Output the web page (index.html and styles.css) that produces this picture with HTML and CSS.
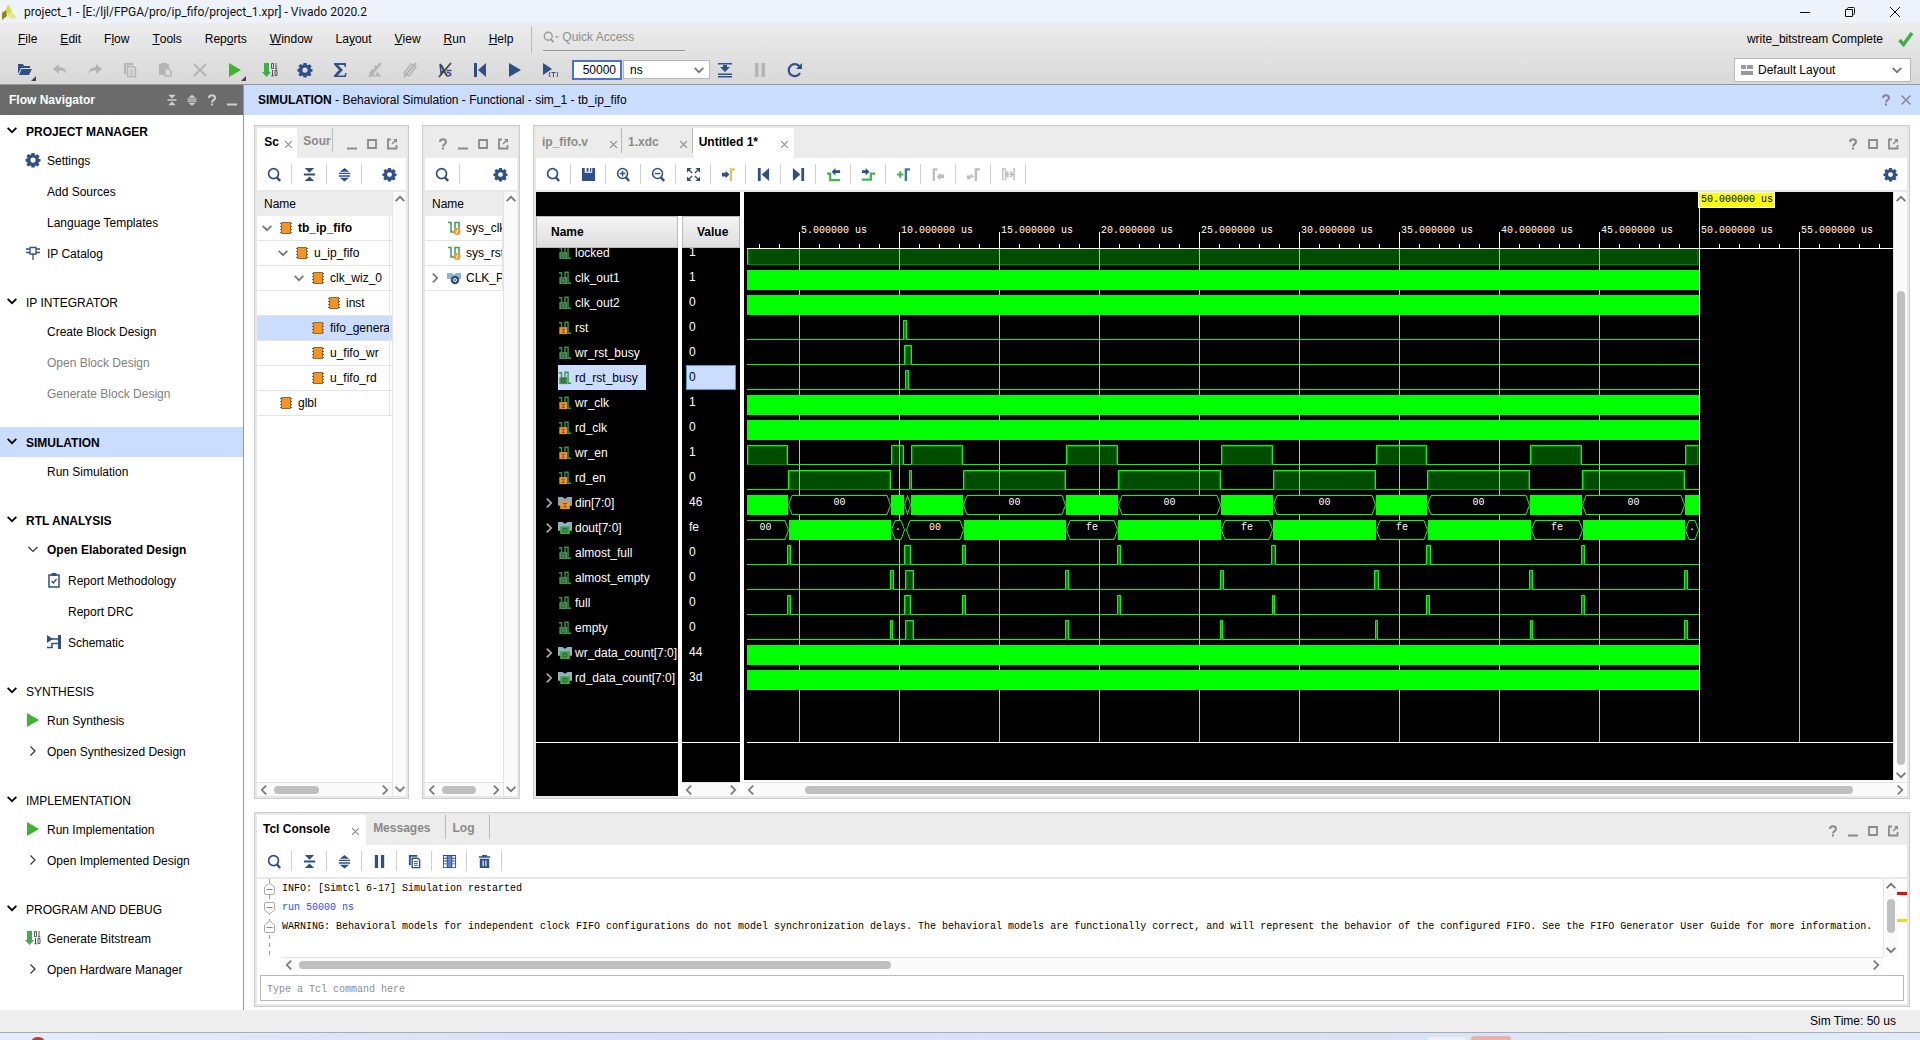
FILE: index.html
```html
<!DOCTYPE html>
<html lang="en">
<head>
<meta charset="utf-8">
<title>project_1 - [E:/ljl/FPGA/pro/ip_fifo/project_1.xpr] - Vivado 2020.2</title>
<link rel="stylesheet" href="styles.css">
</head>
<body>
<svg class="sprite" aria-hidden="true">
  <symbol id="logo" viewBox="0 0 16 16"><path d="M7 0l4 7-3 4-4-3z" fill="#d9d94a"/><path d="M1 9l4-3 1 6-5 4z" fill="#8a8a10"/><path d="M6 12l5-4 5 6-5 1z" fill="#e6e68c"/></symbol>
  <symbol id="folder" viewBox="0 0 16 16"><path d="M1 12V2h5l1 2h6v2H4z" fill="#2f4f87"/><path d="M4.500 7H15l-3 6H2z" fill="#2f4f87"/></symbol>
  <symbol id="undo" viewBox="0 0 16 16"><path d="M1 7l6-5v3c5 0 7 3 8 7-2-3-4-3.500-8-3.500V12z" fill="#b4b4b4"/></symbol>
  <symbol id="redo" viewBox="0 0 16 16"><path d="M15 7L9 2v3C4 5 2 8 1 12c2-3 4-3.500 8-3.500V12z" fill="#b4b4b4"/></symbol>
  <symbol id="copy" viewBox="0 0 16 16"><path d="M2 1h9v2H4v9H2z" fill="currentColor"/><path d="M5.500 4.500h6l2 2v8h-8z" fill="none" stroke="currentColor" stroke-width="1.500"/><path d="M7.500 8h4M7.500 10h4M7.500 12h4" stroke="currentColor"/></symbol>
  <symbol id="paste" viewBox="0 0 16 16"><path d="M2 2h10v4H8v7H2zM4 1h6v1H4z" fill="#b4b4b4"/><path d="M8 7h4l2 2v5H8z" fill="none" stroke="#b4b4b4" stroke-width="1.500"/></symbol>
  <symbol id="cross" viewBox="0 0 16 16"><path d="M2 2l12 12M14 2L2 14" stroke="currentColor" stroke-width="2"/></symbol>
  <symbol id="play" viewBox="0 0 16 16"><path d="M2 1l12 7-12 7z" fill="currentColor"/></symbol>
  <symbol id="bits" viewBox="0 0 16 16"><path d="M2 1h5v9h2l-4.500 5L0 10h2z" fill="#41ad49"/><path d="M9.500 1.500h2v5h-2zM14 1v6M12.800 6.800h2.500M10.500 8v6M9.300 13.800h2.500M13 8.500h2v5h-2z" fill="none" stroke="#555"/></symbol>
  <symbol id="gear" viewBox="0 0 16 16"><path fill="#2f4f87" fill-rule="evenodd" d="M6.500 1h3l.4 1.900 1 .4L12.600 2.200l2 2-1.100 1.700.4 1L15.500 7v2.500l-1.600.4-.5 1 1.100 1.600-2 2-1.600-1-1 .4L9.500 15.500h-3l-.4-1.700-1-.4-1.700 1.100-2-2 1.100-1.600-.4-1L.5 9.500V7l1.700-.4.4-1L1.500 4.100l2-2 1.600 1 1-.4zM8 5.500a2.600 2.600 0 100 5.200 2.600 2.600 0 000-5.200z"/></symbol>
  <symbol id="sigma" viewBox="0 0 16 16"><path d="M2 1h12v4h-1.200L12 3H6l5 5-5.500 5.500H12.500L13.300 11H14.500L14 15H2v-1.500L7 8 2 2.500z" fill="#2f4f87"/></symbol>
  <symbol id="brushx" viewBox="0 0 16 16"><path d="M2 12l3-5 3 1-1 5zM8 3l3 2-2 3-2-2zM10 9l3 4h-4zM2 13h12v1.500H2z" fill="#b4b4b4"/><path d="M2 15L14 1" stroke="#b4b4b4" stroke-width="2"/></symbol>
  <symbol id="eraserx" viewBox="0 0 16 16"><path d="M2 11l7-9 5 3-7 9zM6 10l5-6" fill="none" stroke="#b4b4b4" stroke-width="1.500"/><path d="M2 15L14 1" stroke="#b4b4b4" stroke-width="2"/></symbol>
  <symbol id="probex" viewBox="0 0 16 16"><path d="M3 2l1 9 3-3zM9.500 8.500h5M10 10.500c5 0 5 3.500 0 3.500" fill="none" stroke="#2f4f87" stroke-width="1.500"/><path d="M2 15L14 1M4 3l6 11" stroke="#444" stroke-width="1.800"/></symbol>
  <symbol id="first" viewBox="0 0 16 16"><path d="M2 1h3v14H2zM14 1v14L6 8z" fill="#2f4f87"/></symbol>
  <symbol id="last" viewBox="0 0 16 16"><path d="M11 1h3v14h-3zM2 1v14l8-7z" fill="#2f4f87"/></symbol>
  <symbol id="playt" viewBox="0 0 16 16"><path d="M1 1l9 6-9 6z" fill="#2f4f87"/><path d="M8 10q-1.500 2.500 0 5M15 10q1.500 2.500 0 5M9.500 10.500h4M11.500 10.500V15" fill="none" stroke="#2f4f87"/></symbol>
  <symbol id="step" viewBox="0 0 16 16"><path d="M1 1h14v1.500H1zM1 11.500h14V13H1zM1 14h14v1.500H1zM6 3h4v2h3L8 10 3 5h3z" fill="#2f4f87"/></symbol>
  <symbol id="pause" viewBox="0 0 16 16"><path d="M3 1h3.500v14H3zM9.500 1H13v14H9.500z" fill="currentColor"/></symbol>
  <symbol id="reload" viewBox="0 0 16 16"><path d="M13 11a6 6 0 11-.5-6.500" fill="none" stroke="#2f4f87" stroke-width="2.200"/><path d="M15 1v6H9z" fill="#2f4f87"/></symbol>
  <symbol id="search" viewBox="0 0 16 16"><circle cx="7" cy="7" r="5.300" fill="none" stroke="currentColor" stroke-width="1.800"/><path d="M10.500 11l3.500 4" stroke="currentColor" stroke-width="2.500"/></symbol>
  <symbol id="collapse" viewBox="0 0 16 16"><path d="M3 1h10L8 6zM2 7h12v2H2zM3 15h10l-5-5z" fill="currentColor"/></symbol>
  <symbol id="expand" viewBox="0 0 16 16"><path d="M8 1l5 4H3zM2 6h12v1.500H2zM2 8.800h12v1.500H2zM3 11.500h10l-5 4z" fill="currentColor"/></symbol>
  <symbol id="save" viewBox="0 0 16 16"><path d="M1 1h3v5h8V1h3v14H1zM6 1h2v4H6zM9.500 1H11v4H9.500z" fill="#2f4f87"/></symbol>
  <symbol id="zin" viewBox="0 0 16 16"><circle cx="7" cy="7" r="5.300" fill="none" stroke="#2f4f87" stroke-width="1.600"/><path d="M10.500 11l3.500 4" stroke="#2f4f87" stroke-width="2.500"/><path d="M4 7h6M7 4v6" stroke="#2f4f87" stroke-width="1.500"/></symbol>
  <symbol id="zout" viewBox="0 0 16 16"><circle cx="7" cy="7" r="5.300" fill="none" stroke="#2f4f87" stroke-width="1.600"/><path d="M10.500 11l3.500 4" stroke="#2f4f87" stroke-width="2.500"/><path d="M4 7h6" stroke="#2f4f87" stroke-width="1.500"/></symbol>
  <symbol id="fit" viewBox="0 0 16 16"><path d="M1 1h5L1 6zM15 1v5l-5-5zM1 15v-5l5 5zM15 15h-5l5-5z" fill="#2f4f87"/><path d="M2 2l4.500 4.500M14 2L9.500 6.500M2 14l4.500-4.500M14 14L9.500 9.500" stroke="#2f4f87" stroke-width="1.500"/></symbol>
  <symbol id="gocur" viewBox="0 0 16 16"><path d="M1 6h4V4l4 4-4 4v-2H1z" fill="#2f4f87"/><path d="M10.500 15V2.500H15" fill="none" stroke="#dfc259" stroke-width="2.500"/></symbol>
  <symbol id="prevt" viewBox="0 0 16 16"><path d="M1 7h3.500v7H15" fill="none" stroke="#3fb54a" stroke-width="2.400"/><path d="M6 5l4-4v2.500h5v3h-5V9z" fill="#2f4f87"/></symbol>
  <symbol id="nextt" viewBox="0 0 16 16"><path d="M1 13.500h9.500V7H15" fill="none" stroke="#3fb54a" stroke-width="2.400"/><path d="M9 5L5 1v2.500H1v3h4V9z" fill="#2f4f87"/></symbol>
  <symbol id="addm" viewBox="0 0 16 16"><path d="M1 8h7M4.500 4.500v7" stroke="#3fb54a" stroke-width="2"/><path d="M10.500 15V2.500H15" fill="none" stroke="#3a78a8" stroke-width="2.500"/></symbol>
  <symbol id="prevm" viewBox="0 0 16 16"><path d="M3 15V2.500h4" fill="none" stroke="#bdbdbd" stroke-width="2.500"/><path d="M6 10l4-4v2h4v4h-4v2z" fill="#bdbdbd"/></symbol>
  <symbol id="nextm" viewBox="0 0 16 16"><path d="M10.500 15V2.500H15" fill="none" stroke="#bdbdbd" stroke-width="2.500"/><path d="M9 11l-4-4v2H1v4h4v-2z" fill="#bdbdbd"/></symbol>
  <symbol id="swapm" viewBox="0 0 16 16"><path d="M2 1v13M5 2v12M14 1v13M5 8h8M8 5L5 8l3 3M10 5l3 3-3 3M2 2h3" fill="none" stroke="#bdbdbd" stroke-width="1.500"/></symbol>
  <symbol id="cols" viewBox="0 0 16 16"><path d="M1 1h14v14H1z" fill="#2f4f87"/><path d="M2 2h3v2H2zM2 5h3v2H2zM2 8h3v2H2zM2 11h3v3H2zM11 2h3v2h-3zM11 5h3v2h-3zM11 8h3v2h-3zM11 11h3v3h-3z" fill="#fff"/><path d="M6 2h4v12H6z" fill="#5f83c8"/></symbol>
  <symbol id="trash" viewBox="0 0 16 16"><path d="M5.500 1h5v1.500H14V4H2V2.500h3.500zM3 5h10v10H3z" fill="#2f4f87"/><path d="M6.500 7v6M9.500 7v6" stroke="#fff" stroke-width="1.200"/></symbol>
  <symbol id="help" viewBox="0 0 16 16"><path d="M5 6c0-3.600 6-3.600 6 0 0 2.200-3 2-3 4.500" fill="none" stroke="currentColor" stroke-width="2"/><path d="M7 11.500h2v2H7z" fill="currentColor"/></symbol>
  <symbol id="min" viewBox="0 0 16 16"><path d="M3 11.500h10v2H3z" fill="currentColor"/></symbol>
  <symbol id="max" viewBox="0 0 16 16"><path d="M4 4h8v8H4z" fill="none" stroke="currentColor" stroke-width="1.800"/></symbol>
  <symbol id="float" viewBox="0 0 16 16"><path d="M7 3.500H4v9h8.500V9" fill="none" stroke="currentColor" stroke-width="1.800"/><path d="M9 3h4v4l-1.500-1.500L8.500 8.500l-1-1 3-3z" fill="currentColor"/></symbol>
  <symbol id="down" viewBox="0 0 16 16"><path d="M3 5.500l5 5 5-5" fill="none" stroke="currentColor" stroke-width="2"/></symbol>
  <symbol id="downt" viewBox="0 0 16 16"><path d="M3.500 6l4.500 4.500L12.500 6" fill="none" stroke="#333" stroke-width="1.200"/></symbol>
  <symbol id="rightt" viewBox="0 0 16 16"><path d="M5.500 3.500L10 8l-4.500 4.500" fill="none" stroke="#333" stroke-width="1.200"/></symbol>
  <symbol id="up" viewBox="0 0 16 16"><path d="M3 10.500l5-5 5 5" fill="none" stroke="currentColor" stroke-width="2"/></symbol>
  <symbol id="left" viewBox="0 0 16 16"><path d="M10.500 3l-5 5 5 5" fill="none" stroke="currentColor" stroke-width="2"/></symbol>
  <symbol id="right" viewBox="0 0 16 16"><path d="M5.500 3l5 5-5 5" fill="none" stroke="currentColor" stroke-width="2"/></symbol>
  <symbol id="check" viewBox="0 0 16 16"><path d="M1.500 9l4 4.500L14 2" fill="none" stroke="#41ad49" stroke-width="3.500"/></symbol>
  <symbol id="layout" viewBox="0 0 16 16"><path d="M2 3h5v4H2zM8 3h6v4H8zM2 9h12v4H2z" fill="#9a9a9a"/></symbol>
  <symbol id="ip" viewBox="0 0 16 16"><path d="M5 2.500h6v6.500H5zM1 4h4M1 7.500h4M11 4h4M11 7.500h4M8 9v6" fill="none" stroke="#2f4f87" stroke-width="1.300"/></symbol>
  <symbol id="report" viewBox="0 0 16 16"><path d="M3 3h10v12H3z" fill="none" stroke="#2f4f87" stroke-width="1.500"/><path d="M5.500 1h5v3h-5z" fill="#2f4f87"/><path d="M5.500 9l2 2 3-4" fill="none" stroke="#2f4f87" stroke-width="1.300"/></symbol>
  <symbol id="schem" viewBox="0 0 16 16"><path d="M1 1l6 4-6 4zM12 1h3v14h-3z" fill="#2f4f87"/><path d="M6 5h7M1 13.500h5V9.500h7" fill="none" stroke="#2f4f87" stroke-width="1.600"/></symbol>
  <symbol id="chip" viewBox="0 0 16 16"><path d="M2 3.500h12M2 6.500h12M2 9.500h12M2 12.500h12" stroke="#666" stroke-width="1.200"/><path d="M3.500 2.500h9v11h-9z" fill="#f7941d" stroke="#8a6a3a"/></symbol>
  <symbol id="sigio" viewBox="0 0 16 16"><path d="M2 2.500h3V12h4V2.500h4V9" fill="none" stroke="#3d9c55" stroke-width="1.500"/><circle cx="11" cy="11.500" r="3.500" fill="#f09a3a"/><path d="M11.500 9.500l-1 4" stroke="#fff"/></symbol>
  <symbol id="param" viewBox="0 0 16 16"><path d="M1 3h5l2 2 2-2h5v6H1z" fill="#8fb4cc"/><circle cx="9" cy="10" r="4.300" fill="#2f4f87"/><circle cx="9" cy="10" r="1.500" fill="none" stroke="#fff"/></symbol>
  <symbol id="sg" viewBox="0 0 16 16"><path d="M1 2h3v5M8 8V1.500h3.500V14H15" fill="none" stroke="#2f9a48" stroke-width="1.600"/><path d="M1.500 7h9v8h-9z" fill="#4d8f55"/><path d="M4 9h4v4H4z" fill="none" stroke="#1e5a2a"/></symbol>
  <symbol id="so" viewBox="0 0 16 16"><path d="M1 2h3v5M8 8V1.500h3.500V14H15" fill="none" stroke="#2f9a48" stroke-width="1.600"/><path d="M1.500 7h9v8h-9z" fill="#ee9430"/><path d="M4 9.500h4M6 9.500v3.500M4 13h4" fill="none" stroke="#8a4a10"/></symbol>
  <symbol id="bg" viewBox="0 0 16 16"><path d="M0 1h5l3 2 3-2h5v10H0z" fill="#8ab4c0"/><path d="M2.500 6h11v9h-11z" fill="#45a04a"/><path d="M6 8.500h4v4H6z" fill="none" stroke="#1e5a2a"/></symbol>
  <symbol id="bo" viewBox="0 0 16 16"><path d="M0 1h5l3 2 3-2h5v10H0z" fill="#8aa4b8"/><path d="M2.500 6h11v9h-11z" fill="#ee9430"/><path d="M5.500 8.500h5M8 8.500v4M6 12.500h4" fill="none" stroke="#8a4a10"/></symbol>
</svg>

<header class="titlebar">
  <svg class="i"><use href="#logo"/></svg>
  <h1>project_1 - [E:/ljl/FPGA/pro/ip_fifo/project_1.xpr] - Vivado 2020.2</h1>
  <div class="winctl">
    <button aria-label="Minimize"><svg width="12" height="12"><path d="M1 6.500h10" stroke="#111"/></svg></button>
    <button aria-label="Restore"><svg width="12" height="12"><path d="M1.500 3.500h7v7h-7zM3.500 3.500v-1q0-1 1-1h5q1 0 1 1v5q0 1-1 1h-1" fill="none" stroke="#111"/></svg></button>
    <button aria-label="Close"><svg width="12" height="12"><path d="M1 1l10 10M11 1L1 11" stroke="#111"/></svg></button>
  </div>
</header>

<div class="chrome">
  <div class="menurow">
    <nav class="menu" aria-label="Main menu">
      <button><u>F</u>ile</button><button><u>E</u>dit</button><button>F<u>l</u>ow</button><button><u>T</u>ools</button><button>Rep<u>o</u>rts</button><button><u>W</u>indow</button><button>La<u>y</u>out</button><button><u>V</u>iew</button><button><u>R</u>un</button><button><u>H</u>elp</button>
    </nav>
    <label class="quick"><svg class="i"><use href="#search"/></svg><span class="caret"></span><input type="text" placeholder="Quick Access" aria-label="Quick Access"></label>
    <p class="state">write_bitstream Complete</p>
    <svg class="i"><use href="#check"/></svg>
  </div>
  <div class="mainbar">
    <button class="drop" aria-label="Open project"><svg class="i"><use href="#folder"/></svg></button>
    <button aria-label="Undo"><svg class="i"><use href="#undo"/></svg></button>
    <button aria-label="Redo"><svg class="i"><use href="#redo"/></svg></button>
    <button class="off" aria-label="Copy"><svg class="i"><use href="#copy"/></svg></button>
    <button aria-label="Paste"><svg class="i"><use href="#paste"/></svg></button>
    <button class="off" aria-label="Delete"><svg class="i"><use href="#cross"/></svg></button>
    <button class="drop green" aria-label="Run"><svg class="i"><use href="#play"/></svg></button>
    <button aria-label="Generate bitstream"><svg class="i"><use href="#bits"/></svg></button>
    <button aria-label="Settings"><svg class="i"><use href="#gear"/></svg></button>
    <button aria-label="Project summary"><svg class="i"><use href="#sigma"/></svg></button>
    <button aria-label="Highlight"><svg class="i"><use href="#brushx"/></svg></button>
    <button aria-label="Unmark"><svg class="i"><use href="#eraserx"/></svg></button>
    <button aria-label="Unselect"><svg class="i"><use href="#probex"/></svg></button>
    <button aria-label="Restart"><svg class="i"><use href="#first"/></svg></button>
    <button aria-label="Run all"><svg class="i"><use href="#play"/></svg></button>
    <button aria-label="Run for time"><svg class="i"><use href="#playt"/></svg></button>
    <input class="time" type="text" value="50000" aria-label="Run time">
    <span class="pick unit"><select aria-label="Time unit"><option>ns</option></select><svg class="i"><use href="#down"/></svg></span>
    <button aria-label="Step"><svg class="i"><use href="#step"/></svg></button>
    <button class="off" aria-label="Break"><svg class="i"><use href="#pause"/></svg></button>
    <button aria-label="Relaunch simulation"><svg class="i"><use href="#reload"/></svg></button>
    <span class="pick lay"><svg class="i lead"><use href="#layout"/></svg><select aria-label="Layout"><option>Default Layout</option></select><svg class="i"><use href="#down"/></svg></span>
  </div>
</div>

<div class="body">
  <aside class="flow">
    <header class="flowhead"><h2>Flow Navigator</h2>
      <button aria-label="Collapse all"><svg class="i"><use href="#collapse"/></svg></button><button aria-label="Expand all"><svg class="i"><use href="#expand"/></svg></button><button aria-label="Help"><svg class="i big"><use href="#help"/></svg></button><button aria-label="Minimize"><svg class="i big"><use href="#min"/></svg></button>
    </header>
    <section><h3 class="b"><svg class="i"><use href="#down"/></svg>PROJECT MANAGER</h3>
      <ul><li><svg class="i"><use href="#gear"/></svg><a href="#">Settings</a></li><li><a href="#">Add Sources</a></li><li><a href="#">Language Templates</a></li><li><svg class="i"><use href="#ip"/></svg><a href="#">IP Catalog</a></li></ul></section>
    <section><h3><svg class="i"><use href="#down"/></svg>IP INTEGRATOR</h3>
      <ul><li><a href="#">Create Block Design</a></li><li class="dis"><a href="#">Open Block Design</a></li><li class="dis"><a href="#">Generate Block Design</a></li></ul></section>
    <section><h3 class="b on"><svg class="i"><use href="#down"/></svg>SIMULATION</h3>
      <ul><li><a href="#">Run Simulation</a></li></ul></section>
    <section><h3 class="b"><svg class="i"><use href="#down"/></svg>RTL ANALYSIS</h3>
      <ul><li class="b"><svg class="i"><use href="#downt"/></svg><a href="#">Open Elaborated Design</a></li><li class="sub"><svg class="i"><use href="#report"/></svg><a href="#">Report Methodology</a></li><li class="sub"><a href="#">Report DRC</a></li><li class="sub"><svg class="i"><use href="#schem"/></svg><a href="#">Schematic</a></li></ul></section>
    <section><h3><svg class="i"><use href="#down"/></svg>SYNTHESIS</h3>
      <ul><li class="green"><svg class="i"><use href="#play"/></svg><a href="#">Run Synthesis</a></li><li><svg class="i"><use href="#rightt"/></svg><a href="#">Open Synthesized Design</a></li></ul></section>
    <section><h3><svg class="i"><use href="#down"/></svg>IMPLEMENTATION</h3>
      <ul><li class="green"><svg class="i"><use href="#play"/></svg><a href="#">Run Implementation</a></li><li><svg class="i"><use href="#rightt"/></svg><a href="#">Open Implemented Design</a></li></ul></section>
    <section><h3><svg class="i"><use href="#down"/></svg>PROGRAM AND DEBUG</h3>
      <ul><li><svg class="i"><use href="#bits"/></svg><a href="#">Generate Bitstream</a></li><li><svg class="i"><use href="#rightt"/></svg><a href="#">Open Hardware Manager</a></li></ul></section>
  </aside>

  <main>
    <header class="simhead"><h2><b>SIMULATION</b> - Behavioral Simulation - Functional - sim_1 - tb_ip_fifo</h2>
      <button aria-label="Help"><svg class="i big"><use href="#help"/></svg></button><button aria-label="Close"><svg class="i"><use href="#cross"/></svg></button></header>
    <div class="work">
      <div class="upper">
        <section class="panel scope">
          <header class="tabs"><button class="tab on">Sc</button><button class="tx" aria-label="Close Scope"><svg class="i"><use href="#cross"/></svg></button><button class="tab end">Sour</button>
            <span class="ctl"><button aria-label="Minimize"><svg class="i"><use href="#min"/></svg></button><button aria-label="Maximize"><svg class="i"><use href="#max"/></svg></button><button aria-label="Float"><svg class="i"><use href="#float"/></svg></button></span></header>
          <div class="tools"><button aria-label="Search"><svg class="i"><use href="#search"/></svg></button><button aria-label="Collapse all"><svg class="i"><use href="#collapse"/></svg></button><button aria-label="Expand all"><svg class="i"><use href="#expand"/></svg></button><button class="gear" aria-label="Settings"><svg class="i"><use href="#gear"/></svg></button></div>
          <div class="treebox">
            <div class="tree"><div class="th">Name</div>
              <ul>
                <li><span class="d0 b"><svg class="i c"><use href="#down"/></svg><svg class="i"><use href="#chip"/></svg>tb_ip_fifo</span></li>
                <li><span class="d1"><svg class="i c"><use href="#down"/></svg><svg class="i"><use href="#chip"/></svg>u_ip_fifo</span></li>
                <li><span class="d2"><svg class="i c"><use href="#down"/></svg><svg class="i"><use href="#chip"/></svg>clk_wiz_0</span></li>
                <li><span class="d3"><svg class="i c"></svg><svg class="i"><use href="#chip"/></svg>inst</span></li>
                <li class="on"><span class="d2"><svg class="i c"></svg><svg class="i"><use href="#chip"/></svg>fifo_generator_0</span></li>
                <li><span class="d2"><svg class="i c"></svg><svg class="i"><use href="#chip"/></svg>u_fifo_wr</span></li>
                <li><span class="d2"><svg class="i c"></svg><svg class="i"><use href="#chip"/></svg>u_fifo_rd</span></li>
                <li><span class="d0"><svg class="i c"></svg><svg class="i"><use href="#chip"/></svg>glbl</span></li>
              </ul></div>
            <div class="vs"><svg class="i"><use href="#up"/></svg><svg class="i"><use href="#down"/></svg></div>
            <div class="hs"><svg class="i"><use href="#left"/></svg><i class="t45"></i><svg class="i"><use href="#right"/></svg></div>
          </div>
        </section>

        <section class="panel objs">
          <header class="tabs"><span class="ctl"><button aria-label="Help"><svg class="i"><use href="#help"/></svg></button><button aria-label="Minimize"><svg class="i"><use href="#min"/></svg></button><button aria-label="Maximize"><svg class="i"><use href="#max"/></svg></button><button aria-label="Float"><svg class="i"><use href="#float"/></svg></button></span></header>
          <div class="tools"><button aria-label="Search"><svg class="i"><use href="#search"/></svg></button><button class="gear" aria-label="Settings"><svg class="i"><use href="#gear"/></svg></button></div>
          <div class="treebox">
            <div class="tree flat"><div class="th">Name</div>
              <ul>
                <li><span class="d0"><svg class="i c"></svg><svg class="i"><use href="#sigio"/></svg>sys_clk</span></li>
                <li><span class="d0"><svg class="i c"></svg><svg class="i"><use href="#sigio"/></svg>sys_rst_n</span></li>
                <li><span class="d0"><svg class="i c"><use href="#right"/></svg><svg class="i"><use href="#param"/></svg>CLK_PERIOD</span></li>
              </ul></div>
            <div class="vs"><svg class="i"><use href="#up"/></svg><svg class="i"><use href="#down"/></svg></div>
            <div class="hs"><svg class="i"><use href="#left"/></svg><i class="t34"></i><svg class="i"><use href="#right"/></svg></div>
          </div>
        </section>

        <section class="panel wave">
          <header class="tabs"><button class="tab">ip_fifo.v</button><button class="tx sep" aria-label="Close ip_fifo.v"><svg class="i"><use href="#cross"/></svg></button><button class="tab">1.xdc</button><button class="tx sep" aria-label="Close 1.xdc"><svg class="i"><use href="#cross"/></svg></button><button class="tab on">Untitled 1*</button><button class="tx on" aria-label="Close Untitled 1"><svg class="i"><use href="#cross"/></svg></button>
            <span class="ctl"><button aria-label="Help"><svg class="i"><use href="#help"/></svg></button><button aria-label="Maximize"><svg class="i"><use href="#max"/></svg></button><button aria-label="Float"><svg class="i"><use href="#float"/></svg></button></span></header>
          <div class="tools">
            <button aria-label="Search"><svg class="i"><use href="#search"/></svg></button><button aria-label="Save"><svg class="i"><use href="#save"/></svg></button><button aria-label="Zoom in"><svg class="i"><use href="#zin"/></svg></button><button aria-label="Zoom out"><svg class="i"><use href="#zout"/></svg></button><button aria-label="Zoom fit"><svg class="i"><use href="#fit"/></svg></button><button aria-label="Go to cursor"><svg class="i"><use href="#gocur"/></svg></button><button aria-label="Go to start"><svg class="i"><use href="#first"/></svg></button><button aria-label="Go to end"><svg class="i"><use href="#last"/></svg></button><button aria-label="Previous transition"><svg class="i"><use href="#prevt"/></svg></button><button aria-label="Next transition"><svg class="i"><use href="#nextt"/></svg></button><button aria-label="Add marker"><svg class="i"><use href="#addm"/></svg></button><button aria-label="Previous marker"><svg class="i"><use href="#prevm"/></svg></button><button aria-label="Next marker"><svg class="i"><use href="#nextm"/></svg></button><button aria-label="Swap cursors"><svg class="i"><use href="#swapm"/></svg></button><button class="gear" aria-label="Settings"><svg class="i"><use href="#gear"/></svg></button>
          </div>
          <div class="wavebox">
            <div class="sigs">
              <div class="sigtop"></div>
              <div class="names"><div class="sh">Name</div><div class="clip"><ul id="names"></ul></div></div>
              <div class="vals"><div class="sh">Value</div><div class="clip"><ul id="vals"></ul></div><div class="fill"></div>
                <div class="hs"><svg class="i"><use href="#left"/></svg><svg class="i"><use href="#right"/></svg></div></div>
            </div>
            <div class="plot"><svg id="plot" role="img" aria-label="Waveforms"></svg></div>
            <div class="vs wvs"><svg class="i"><use href="#up"/></svg><i></i><svg class="i"><use href="#down"/></svg></div>
            <div class="hs whs"><svg class="i"><use href="#left"/></svg><i></i><svg class="i"><use href="#right"/></svg></div>
          </div>
        </section>
      </div>

      <section class="panel console">
        <header class="tabs"><button class="tab on">Tcl Console</button><button class="tx on" aria-label="Close Tcl Console"><svg class="i"><use href="#cross"/></svg></button><button class="tab end">Messages</button><button class="tab end">Log</button>
          <span class="ctl"><button aria-label="Help"><svg class="i"><use href="#help"/></svg></button><button aria-label="Minimize"><svg class="i"><use href="#min"/></svg></button><button aria-label="Maximize"><svg class="i"><use href="#max"/></svg></button><button aria-label="Float"><svg class="i"><use href="#float"/></svg></button></span></header>
        <div class="tools"><button aria-label="Search"><svg class="i"><use href="#search"/></svg></button><button aria-label="Collapse all"><svg class="i"><use href="#collapse"/></svg></button><button aria-label="Expand all"><svg class="i"><use href="#expand"/></svg></button><button aria-label="Pause"><svg class="i"><use href="#pause"/></svg></button><button aria-label="Copy"><svg class="i"><use href="#copy"/></svg></button><button aria-label="Columns"><svg class="i"><use href="#cols"/></svg></button><button aria-label="Clear"><svg class="i"><use href="#trash"/></svg></button></div>
        <div class="log">
          <svg class="gut"><path d="M12.500 0v78" stroke="#999" stroke-dasharray="4 4"/><g fill="#fff" stroke="#aaa"><path d="M7.500 8l5-4 5 4v6q0 1.500-1.500 1.500H9q-1.500 0-1.500-1.500z"/><path d="M7.500 31l5 4 5-4v-6q0-1.500-1.500-1.500H9q-1.500 0-1.500 1.500z"/><path d="M7.500 46l5-4 5 4v6q0 1.500-1.500 1.500H9q-1.500 0-1.500-1.500z"/></g><path d="M9.500 10.500h6M9.500 28.500h6M9.500 48.500h6" stroke="#888"/></svg>
          <div class="lines"><p>INFO: [Simtcl 6-17] Simulation restarted</p><p class="cmd">run 50000 ns</p><p>WARNING: Behavioral models for independent clock FIFO configurations do not model synchronization delays. The behavioral models are functionally correct, and will represent the behavior of the configured FIFO. See the FIFO Generator User Guide for more information.</p></div>
          <div class="vs cvs"><svg class="i"><use href="#up"/></svg><i></i><svg class="i"><use href="#down"/></svg></div>
          <div class="marks"><i class="err"></i><i class="warn"></i></div>
          <div class="hs chs"><svg class="i"><use href="#left"/></svg><i></i><svg class="i"><use href="#right"/></svg></div>
        </div>
        <input class="tcl" type="text" placeholder="Type a Tcl command here" aria-label="Tcl command">
      </section>
    </div>
  </main>
</div>
<footer class="status">Sim Time: 50 us</footer>
<div class="taskbar"><i class="dot"></i><i class="pill"></i><i class="pill red"></i></div>
<script src="wave.js"></script>
</body>
</html>
```
FILE: styles.css
```css
* { box-sizing: border-box; }
body, h1, h2, h3, p, ul { margin: 0; padding: 0; }
ul { list-style: none; }
body {
  min-height: 100vh; display: flex; flex-direction: column;
  font: 12px/16px "Liberation Sans", Arial, sans-serif; color: #000; background: #fff;
}
button, input, select { font: inherit; color: inherit; margin: 0; }
button { border: 0; padding: 0; background: none; display: flex; align-items: center; justify-content: center; flex: none; }
h1, h2, h3 { font-size: 12px; font-weight: 400; }
a { color: inherit; text-decoration: none; }
.b { font-weight: 700; }
.i { width: 16px; height: 16px; flex: none; display: block; }
.sprite { display: none; }

.titlebar { display: flex; height: 23px; align-items: center; background: #eef3fb; padding-left: 1px; }
.titlebar h1 { flex: 1; margin-left: 7px; font-family: Roboto, "Noto Sans", sans-serif; color: #111; }
.winctl { display: flex; padding-right: 3px; }
.winctl button { width: 45px; height: 22px; }

.chrome { background: linear-gradient(#ececec, #d8d8d8); border-bottom: 1px solid #999; }
.menurow { display: flex; height: 32px; align-items: center; padding-right: 6px; }
.menu { display: flex; padding-left: 18px; gap: 23px; padding-right: 18px; height: 27px; border-right: 1px solid #bbb; }
.quick { display: flex; align-items: center; width: 142px; height: 24px; margin-left: 11px; border-bottom: 1px solid #999; color: #999; padding-bottom: 4px; }
.quick .i { width: 12px; height: 12px; }
.quick .caret { border: 2px solid transparent; border-top-color: #999; margin: 2px 1px 0 0; }
.quick input { width: 120px; border: 0; background: none; padding: 0 0 0 2px; }
input::placeholder { color: #8d8d8d; opacity: 1; }
.state { margin-left: auto; padding-right: 15px; }
.mainbar { display: flex; height: 29px; align-items: center; padding: 0 9px 0 8px; color: #2f4f87; }
.mainbar button { width: 35px; height: 22px; position: relative; border-right: 1px solid #dcdcdc; }
.mainbar .off { color: #b4b4b4; }
.mainbar .green, .green { color: #3fb52c; }
.drop::after { content: ""; position: absolute; right: 6px; bottom: 0; border-left: 5px solid transparent; border-bottom: 5px solid #444; }
.time { width: 50px; height: 20px; border: 2px solid #4a74cc; padding: 0 4px; text-align: right; color: #000; background: #fff; margin-left: 4px; outline: 0; }
.pick { position: relative; display: flex; height: 19px; align-items: center; margin-left: 1px; background: #fff; border: 1px solid #b8b8b8; color: #777; }
.pick select { appearance: none; flex: 1; border: 0; background: none; padding: 0 6px; color: #000; outline: 0; }
.unit { width: 87px; }
.unit + button { margin-left: -2px; }
.pick .i { width: 14px; height: 14px; margin-right: 3px; }
.lay { width: 177px; height: 24px; margin-left: auto; }
.lay .lead { width: 16px; height: 16px; margin: 0 0 0 4px; }
.lay select { padding: 0 3px; }
.lay .i:last-child { margin-right: 6px; }

.body { flex: 1; display: flex; }
.flow { width: 244px; flex: none; border-right: 1px solid #999; }
.flowhead { display: flex; align-items: center; height: 30px; background: #6b6b6b; color: #d0d0d0; padding-left: 9px; padding-right: 1px; margin-bottom: 1px; }
.flowhead h2 { flex: 1; color: #fff; font-weight: 700; }
.flowhead button { width: 20px; height: 20px; }
.flowhead .i, .simhead .i { width: 12px; height: 12px; }
.flowhead .big, .simhead .big { width: 16px; height: 16px; }
.flow section { margin-bottom: 17px; }
.flow h3 { display: flex; align-items: center; height: 30px; padding: 2px 0 0 5px; gap: 7px; }
.flow h3 .i { width: 14px; height: 14px; margin-bottom: 4px; }
.flow h3.b { font-weight: 700; }
.flow .on { background: #cbddfe; }
.flow li { display: grid; grid-template-columns: 16px auto; gap: 6px; align-items: center; height: 31px; padding: 0 0 2px 25px; justify-content: start; }
.flow li a { grid-column: 2; color: #000; }
.flow li.dis a { color: #808080; }
.flow li .i { margin-bottom: 2px; }
.flow li.sub { padding-left: 46px; }

main { flex: 1; min-width: 0; display: flex; flex-direction: column; }
.simhead { display: flex; align-items: center; height: 30px; background: #cbddfe; padding: 0 4px 0 14px; color: #888; }
.simhead h2 { flex: 1; color: #000; }
.simhead button { width: 20px; }
.work { flex: 1; display: flex; flex-direction: column; gap: 13px; padding: 10px 10px 3px; }
.upper { flex: 1; display: flex; gap: 13px; }
.panel { border: 1px solid #ccc; background: #fff; display: flex; flex-direction: column; min-width: 0; box-shadow: inset 0 0 0 2px #e8e8e8; padding: 2px; }
.scope { width: 155px; }
.objs { width: 98px; }
.wave { flex: 1; }

.tabs { display: flex; height: 30px; background: #ececec; color: #8a8a8a; font-weight: 700; flex: none; }
.tab { height: 30px; padding: 0 0 3px 6px; }
.tab.on { background: #fff; color: #000; }
.tab.on + .tx { background: #fff; }
.tx { width: 20px; height: 30px; padding-top: 2px; color: #8a8a8a; }
.tx .i { width: 9px; height: 9px; }
.tab.end { height: 24px; padding-top: 4px; padding-left: 7px; border-right: 1px solid #bbb; }
.scope .tab.end { width: 36px; padding-right: 2px; }
.scope .tab.on { width: 23px; }
.scope .tx { width: 17px; }
.wave .tx { width: 34px; padding-left: 16px; }
.wave .tx.on { width: 36px; }
.wave .tx.sep { box-shadow: inset -1px 0 #bbb; height: 25px; padding-top: 7px; }
.console .tx { width: 36px; padding-left: 14px; }
.console .tab.end { padding-right: 14px; }
.ctl { display: flex; align-items: center; margin-left: auto; padding: 2px 4px 0 0; }
.ctl button { width: 20px; height: 20px; }
.tools { display: flex; height: 34px; align-items: center; border-bottom: 2px solid #e8e8e8; color: #2f4f87; flex: none; }
.tools button { width: 35px; height: 20px; border-right: 1px solid #d0d0d0; }
.tools .gear { margin-left: auto; border: 0; width: 34px; }
.tools .i { width: 15px; height: 15px; }

.treebox { flex: 1; display: grid; grid-template: 1fr 14px / minmax(0, 1fr) 14px; }
.tree { overflow: hidden; }
.th { height: 24px; background: #ececec; padding: 4px 0 0 7px; }
.tree li { height: 25px; border-bottom: 1px solid #e4e4e4; padding-right: 2px; display: flex; }
.tree.flat li { padding-right: 0; }
.tree li.on { background: #cbddfe; }
.tree span { flex: 1; min-width: 0; overflow: hidden; display: flex; align-items: center; white-space: nowrap; border-right: 1px solid #e4e4e4; }
.tree .i { margin-right: 4px; }
.tree .c { margin-right: 4px; color: #777; width: 14px; height: 14px; }
.d0 { padding-left: 3px; }
.d1 { padding-left: 19px; }
.d2 { padding-left: 35px; }
.d3 { padding-left: 51px; }
.vs, .hs { background: #fafafa; color: #777; display: flex; align-items: center; justify-content: space-between; }
.vs { flex-direction: column; border-left: 1px solid #e4e4e4; }
.treebox .vs { grid-row: 1 / 3; grid-column: 2; }
.hs { border-top: 1px solid #e4e4e4; height: 14px; }
.vs i, .hs i { background: #bfbfbf; border-radius: 4px; }
.hs i { height: 8px; margin-right: auto; }
.hs .i, .vs .i { width: 14px; height: 14px; }
.t45 { width: 45px; margin-left: 3px; }
.t34 { width: 34px; margin-left: 3px; }

.wavebox { flex: 1; display: grid; grid-template: 1fr 14px / 204px minmax(0, 1fr) 14px; column-gap: 0; }
.sigs { grid-row: 1 / 3; display: grid; grid-template: 24px 1fr / 142px 58px; column-gap: 4px; color: #fff; }
.sigtop { grid-column: 1 / 3; background: #000; }
.names { background: #000; display: flex; flex-direction: column; min-width: 0; }
.vals { display: flex; flex-direction: column; min-width: 0; }
.sh { height: 32px; background: linear-gradient(#f4f4f4, #dedede); border: 1px solid #bbb; color: #000; font-weight: 700; padding: 7px 0 0 14px; }
.clip { height: 495px; overflow: hidden; border-bottom: 1px solid #fff; background: #000; }
.clip ul { margin-top: -8px; }
.clip li { height: 25px; display: flex; align-items: center; white-space: nowrap; }
.names li { padding-left: 6px; }
.names .i { width: 14px; height: 14px; }
.names .c { margin-right: 2px; color: #aaa; }
.names span { display: flex; align-items: center; gap: 3px; height: 25px; padding-right: 8px; }
.names .on span { background: #cbddfe; color: #000; }
.vals li { padding-left: 4px; }
.vals li b { font-weight: 400; width: 50px; height: 25px; padding: 4px 2px; border: 1px solid transparent; line-height: 15px; }
.vals .on b { background: #cbddfe; color: #000; border-color: #4a9ad0; }
.fill { flex: 1; background: #000; }
.plot { background: #000; margin-left: 4px; margin-bottom: 2px; position: relative; }
#plot { position: absolute; inset: 0; width: 100%; height: 100%; }
#plot text { font: 10px "Liberation Mono", monospace; fill: #fff; }
#plot .cur { fill: #000; }
.plot, .sigs { margin-right: 0; }
.wvs i { width: 8px; height: 474px; margin: auto 0 3px; }
.whs { grid-column: 2 / 4; margin-left: 4px; }
.whs i { flex: 1; margin: 0 40px 0 47px; }

.log { display: grid; grid-template: 78px 14px / 25px minmax(0, 1fr) 14px 10px; }
.gut { width: 25px; height: 78px; }
.lines { font: 10px/19px "Liberation Mono", monospace; white-space: nowrap; overflow: hidden; }
.cmd { color: #1a53ff; }
.cvs i { width: 8px; height: 34px; margin: 6px 0 auto; }
.marks i { display: block; height: 3px; }
.err { background: #f00; margin-top: 13px; }
.warn { background: #e8d82c; margin-top: 24px; }
.chs { grid-column: 2; }
.chs i { width: 37%; margin-left: 3px; }
.tcl { border: 1px solid #b8b8b8; height: 26px; margin: 4px 3px 3px; padding: 2px 6px 0; font: 10px "Liberation Mono", monospace; outline: 0; }

.status { height: 23px; background: #eee; border-bottom: 1px solid #aab; padding: 3px 24px 0 0; text-align: right; }
.taskbar { height: 7px; background: linear-gradient(90deg, #e4eef8, #d8e0f6 30%, #d8e2f4 70%, #e2ecf6); display: flex; align-items: end; overflow: hidden; }
.dot { width: 12px; height: 3px; border-radius: 50% 50% 0 0 / 100% 100% 0 0; background: #c43a34; margin-left: 32px; }
.pill { width: 38px; height: 3px; border-radius: 3px 3px 0 0; background: #eef0f8; margin-left: auto; }
.pill.red { width: 40px; height: 4px; background: #eab0ac; margin: 0 409px 0 5px; }
```
FILE: wave.js
```js
// Signals of the waveform window; spans are in plot pixels (20 px per microsecond).
const END = 955, LEFT = 3;
const periods = [[219, 322], [374, 477], [529, 632], [683, 786], [838, 941]];
const signals = [
  { n: 'locked', v: '1', ic: 'sg', high: [[3, END]] },
  { n: 'clk_out1', v: '1', ic: 'sg', solid: [[LEFT, END]] },
  { n: 'clk_out2', v: '0', ic: 'sg', solid: [[LEFT, END]] },
  { n: 'rst', v: '0', ic: 'so', high: [[159, 163]] },
  { n: 'wr_rst_busy', v: '0', ic: 'sg', high: [[160, 168]] },
  { n: 'rd_rst_busy', v: '0', ic: 'sg', on: true, high: [[161, 165]] },
  { n: 'wr_clk', v: '1', ic: 'so', solid: [[LEFT, END]] },
  { n: 'rd_clk', v: '0', ic: 'so', solid: [[LEFT, END]] },
  { n: 'wr_en', v: '1', ic: 'so', high: [[3, 44], [147, 160], [167, 219], [322, 374], [477, 529], [632, 683], [786, 838], [941, END]] },
  { n: 'rd_en', v: '0', ic: 'so', high: [[44, 147], [165, 168], ...periods] },
  { n: 'din[7:0]', v: '46', ic: 'bo', bus: true,
    solid: [[LEFT, 44], [147, 160], [167, 219], [322, 374], [477, 529], [632, 683], [786, 838], [941, END]],
    hex: [[44, 147, '00'], [160, 167, ''], ...periods.map(p => [...p, '00'])] },
  { n: 'dout[7:0]', v: 'fe', ic: 'bg', bus: true,
    solid: [[45, 147], [220, 322], [374, 477], [529, 632], [684, 787], [839, 941]],
    hex: [[-2, 45, '00'], [147, 161, '.'], [162, 220, '00'], [322, 374, 'fe'], [477, 529, 'fe'], [632, 684, 'fe'], [787, 839, 'fe'], [941, END, '.']] },
  { n: 'almost_full', v: '0', ic: 'sg', high: [[43, 47], [160, 167], [218, 222], [373, 377], [527, 532], [682, 687], [837, 841]] },
  { n: 'almost_empty', v: '0', ic: 'sg', high: [[146, 150], [161, 170], [321, 325], [476, 480], [630, 635], [785, 789], [940, 944]] },
  { n: 'full', v: '0', ic: 'sg', high: [[43, 47], [160, 167], [218, 222], [373, 377], [528, 531], [682, 686], [837, 841]] },
  { n: 'empty', v: '0', ic: 'sg', high: [[146, 149], [161, 170], [321, 325], [476, 479], [631, 634], [786, 789], [940, 944]] },
  { n: 'wr_data_count[7:0]', v: '44', ic: 'bg', bus: true, solid: [[LEFT, END]] },
  { n: 'rd_data_count[7:0]', v: '3d', ic: 'bg', bus: true, solid: [[LEFT, END]] }
];

const icon = (id, cls = '') => `<svg class="i ${cls}">${id ? `<use href="#${id}"/>` : ''}</svg>`;
document.getElementById('names').innerHTML = signals.map(s =>
  `<li class="${s.on ? 'on' : ''}">${icon(s.bus ? 'right' : '', 'c')}<span>${icon(s.ic)}${s.n}</span></li>`).join('');
document.getElementById('vals').innerHTML = signals.map(s =>
  `<li class="${s.on ? 'on' : ''}"><b>${s.v}</b></li>`).join('');

const rect = (x, y, w, h, a) => `<rect x="${x}" y="${y}" width="${w}" height="${h}" ${a}/>`;
let out = '';
for (let k = 0; k <= 10; k++) {
  const x = 55 + 100 * k;
  out += rect(x, 57, 1, 493, 'fill="#bebebe"') + rect(x, 40, 1, 16, 'fill="#fff"');
  out += `<text x="${x + 2}" y="41">${5 * (k + 1)}.000000 us</text>`;
}
for (let x = 15; x < 1147; x += 20) out += rect(x, 52, 1, 4, 'fill="#fff"');
out += '<svg y="57" width="100%" height="493"><g transform="translate(0 -57)">';
signals.forEach((s, i) => {
  const y = 53 + 25 * i, b = y + 19.5, t = y + 0.5;
  (s.solid || []).forEach(([a, z]) => { out += rect(a, y, z - a, 20, 'fill="#0f0"'); });
  if (s.high) {
    let d = `M${LEFT} ${b}`;
    s.high.forEach(([a, z]) => {
      out += rect(a, y, z - a, 20, 'fill="#0f0" fill-opacity=".3"');
      out += rect(a + 1.5, y + 1.5, Math.max(z - a - 3, 0.5), 18, 'fill="none" stroke="#0f0" stroke-opacity=".35"');
      d += `H${a + 0.5}V${t}H${z - 0.5}`;
      if (z < END) d += `V${b}`;
    });
    if (s.high.at(-1)[1] < END) d += `H${END}`;
    out += `<path d="${d}" fill="none" stroke="#0f0"/>`;
  }
  (s.hex || []).forEach(([a, z, label]) => {
    const c = Math.min(4, (z - a) / 2);
    out += `<path d="M${a + 0.5} ${y + 10}L${a + c} ${t}H${z - c}L${z - 0.5} ${y + 10}L${z - c} ${b}H${a + c}Z" fill="#000" stroke="#0f0"/>`;
    out += `<text x="${(a + z) / 2}" y="${y + 10}" text-anchor="middle">${label}</text>`;
  });
});
out += rect(0, 57, LEFT, 493, 'fill="#000"') + '</g></svg>';
out += '<line x1="3" x2="100%" y1="56.5" y2="56.5" stroke="#fff"/><line x1="3" x2="100%" y1="550.5" y2="550.5" stroke="#fff"/>';
out += rect(END, 16, 1, 534, 'fill="#ff0"') + rect(954.5, 0.5, 76, 15, 'fill="#ff0" stroke="#fff"');
out += '<text class="cur" x="957" y="10">50.000000 us</text>';
document.getElementById('plot').innerHTML = out;
```
